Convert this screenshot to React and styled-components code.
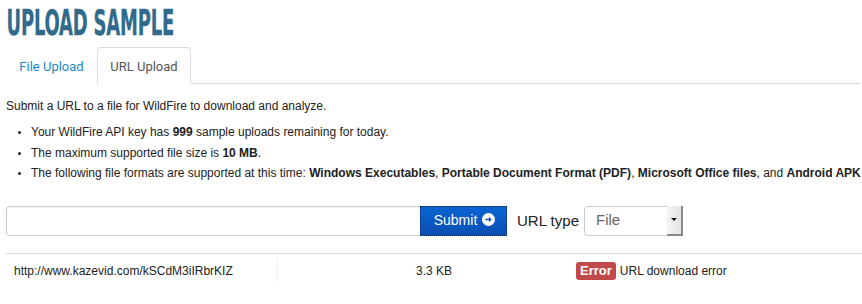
import React from 'react';
import styled, { createGlobalStyle } from 'styled-components';

const GlobalStyle = createGlobalStyle`
    body {
        margin: 0;
        background: #fff;
        font-family: "Liberation Sans", Arial, sans-serif;
        color: #222;
    }
`;

const Page = styled.div`
    width: 862px;
    padding: 0 0 0 6px;
    box-sizing: border-box;
`;

const Title = styled.h1`
    margin: 0;
    padding: 6px 0 0 1px;
    height: 40px;
    font-family: "DejaVu Sans Condensed", "DejaVu Sans", sans-serif;
    font-weight: bold;
    font-size: 35px;
    line-height: 34px;
    letter-spacing: -0.3px;
    color: #316a8b;
    transform: scaleX(0.57);
    transform-origin: left;
    white-space: nowrap;
    -webkit-text-stroke: 0.3px #316a8b;
`;

const Tabs = styled.div`
    display: flex;
    align-items: flex-end;
    height: 37px;
    border-bottom: 1px solid #ddd;
    margin-right: 2px;
`;

const Tab = styled.div`
    height: 37px;
    width: ${p => p.w}px;
    box-sizing: border-box;
    display: flex;
    align-items: center;
    justify-content: center;
    white-space: nowrap;
    font-family: Roboto, "Liberation Sans", sans-serif;
    font-size: 13px;
    color: ${p => (p.active ? '#555' : '#1a8bce')};
    border: 1px solid ${p => (p.active ? '#ddd' : 'transparent')};
    border-bottom: none;
    border-radius: 4px 4px 0 0;
    background: #fff;
    margin-bottom: -1px;
`;

const Intro = styled.p`
    margin: 14px 0 0 0;
    font-size: 12px;
    line-height: 16px;
`;

const List = styled.ul`
    margin: 8px 0 0 0;
    padding: 0 0 0 25px;
    font-size: 12px;
    line-height: 20.5px;
    li::marker { font-size: 10px; }
`;

const Form = styled.div`
    display: flex;
    align-items: center;
    margin-top: 22px;
    height: 30px;
`;

const UrlInput = styled.input`
    width: 414px;
    height: 30px;
    box-sizing: border-box;
    border: 1px solid #ccc;
    border-right: none;
    border-radius: 4px 0 0 4px;
    box-shadow: inset 0 1px 1px rgba(0, 0, 0, 0.05);
    outline: none;
`;

const SubmitButton = styled.button`
    width: 87px;
    height: 30px;
    box-sizing: border-box;
    border: 1px dotted #0a2d6b;
    background: linear-gradient(#0a64d2, #0b4eb2);
    color: #fff;
    font-family: "Liberation Sans", Arial, sans-serif;
    font-size: 14px;
    display: flex;
    align-items: center;
    justify-content: center;
    gap: 5px;
    padding: 0 0 2px 2px;
`;

const Label = styled.span`
    margin-left: 10px;
    font-family: "Liberation Sans", Arial, sans-serif;
    font-size: 15px;
    color: #222;
`;

const Select = styled.div`
    margin-left: 5px;
    width: 99px;
    height: 30px;
    box-sizing: border-box;
    border: 1px solid #ccc;
    border-radius: 4px 0 0 4px;
    display: flex;
    align-items: stretch;
    font-family: "Liberation Sans", Arial, sans-serif;
    font-size: 15px;
    color: #666;
`;

const SelectValue = styled.div`
    flex: 1;
    padding: 4px 0 0 11px;
`;

const SelectArrow = styled.div`
    width: 14px;
    background: linear-gradient(90deg, #f4f4f4, #e4e4e4);
    border-right: 2px solid #888;
    border-bottom: 2px solid #888;
    display: flex;
    align-items: center;
    justify-content: center;
    margin: -1px -1px -1px 0;
    &::after {
        content: '';
        border-left: 3px solid transparent;
        border-right: 3px solid transparent;
        border-top: 3px solid #111;
    }
`;

const Table = styled.div`
    margin-top: 17px;
    border-top: 1px solid #ddd;
`;

const Row = styled.div`
    display: grid;
    grid-template-columns: 272px 130px 160px 1fr;
    align-items: center;
    height: 34px;
    font-size: 12px;
`;

const Cell = styled.div`
    padding-left: 8px;
    align-self: stretch;
    display: flex;
    align-items: center;
    margin: 5px 0 5px 0;
    border-right: 1px solid ${p => (p.divider ? '#f3f3f3' : 'transparent')};
`;

const Badge = styled.span`
    background: #c0494a;
    color: #fff;
    font-weight: bold;
    font-size: 13px;
    border-radius: 3px;
    padding: 1px 4px 2px;
    margin-right: 4px;
`;

const ArrowCircle = () => (
    <svg width="13" height="13" viewBox="0 0 16 16">
        <circle cx="8" cy="8" r="8" fill="#fff" />
        <path d="M4 7h4.5V4.5L12 8l-3.5 3.5V9H4z" fill="#0b55bd" />
    </svg>
);

const App = () => {
    return (
        <Page>
            <GlobalStyle />
            <Title>UPLOAD SAMPLE</Title>
            <Tabs>
                <Tab w={91}>File Upload</Tab>
                <Tab w={94} active>URL Upload</Tab>
            </Tabs>
            <Intro>Submit a URL to a file for WildFire to download and analyze.</Intro>
            <List>
                <li>Your WildFire API key has <b>999</b> sample uploads remaining for today.</li>
                <li>The maximum supported file size is <b>10 MB</b>.</li>
                <li>
                    The following file formats are supported at this time: <b>Windows Executables</b>,{' '}
                    <b>Portable Document Format (PDF)</b>, <b>Microsoft Office files</b>, and <b>Android APK</b>
                </li>
            </List>
            <Form>
                <UrlInput />
                <SubmitButton>Submit <ArrowCircle /></SubmitButton>
                <Label>URL type</Label>
                <Select>
                    <SelectValue>File</SelectValue>
                    <SelectArrow />
                </Select>
            </Form>
            <Table>
                <Row>
                    <Cell divider>http://www.kazevid.com/kSCdM3iIRbrKIZ</Cell>
                    <Cell />
                    <Cell>3.3 KB</Cell>
                    <Cell><Badge>Error</Badge>URL download error</Cell>
                </Row>
            </Table>
        </Page>
    );
};

export default App;
